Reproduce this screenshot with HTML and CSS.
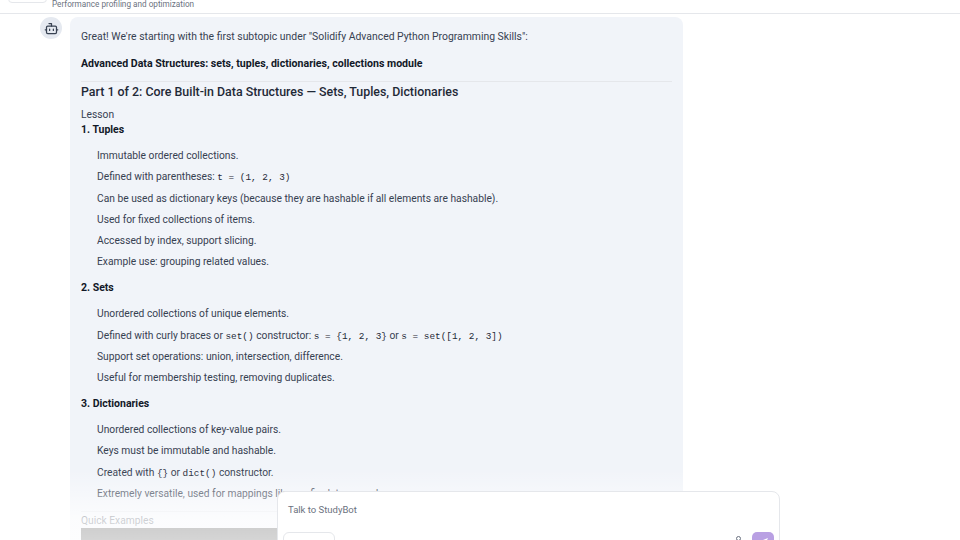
FILE: index.html
```html
<!DOCTYPE html>
<html lang="en">
<head>
    <meta charset="UTF-8">
    <title>StudyBot</title>
    <link rel="stylesheet" href="styles.css">
</head>
<body>
    <header class="topbar">
        <div class="topbar-pill"></div>
        <p class="topbar-sub">Performance profiling and optimization</p>
    </header>

    <main class="chat">
        <div class="avatar">
            <svg width="15" height="15" viewBox="0 0 24 24" fill="none" stroke="#374151" stroke-width="2" stroke-linecap="round" stroke-linejoin="round">
                <path d="M12 8V4H8"/>
                <rect x="4" y="8" width="16" height="12" rx="2"/>
                <path d="M2 14h2M20 14h2M15 13v2M9 13v2"/>
            </svg>
        </div>
        <article class="bubble">
            <p class="intro">Great! We're starting with the first subtopic under "Solidify Advanced Python Programming Skills":</p>
            <p class="intro-bold">Advanced Data Structures: sets, tuples, dictionaries, collections module</p>
            <hr class="rule">
            <h2 class="part-title">Part 1 of 2: Core Built-in Data Structures — Sets, Tuples, Dictionaries</h2>
            <p class="lesson">Lesson</p>
            <h3 class="topic first">1. Tuples</h3>
            <ul class="items">
                <li>Immutable ordered collections.</li>
                <li>Defined with parentheses: <code>t = (1, 2, 3)</code></li>
                <li>Can be used as dictionary keys (because they are hashable if all elements are hashable).</li>
                <li>Used for fixed collections of items.</li>
                <li>Accessed by index, support slicing.</li>
                <li>Example use: grouping related values.</li>
            </ul>
            <h3 class="topic">2. Sets</h3>
            <ul class="items">
                <li>Unordered collections of unique elements.</li>
                <li>Defined with curly braces or <code>set()</code> constructor: <code>s = {1, 2, 3}</code> or <code>s = set([1, 2, 3])</code></li>
                <li>Support set operations: union, intersection, difference.</li>
                <li>Useful for membership testing, removing duplicates.</li>
            </ul>
            <h3 class="topic">3. Dictionaries</h3>
            <ul class="items">
                <li>Unordered collections of key-value pairs.</li>
                <li>Keys must be immutable and hashable.</li>
                <li>Created with <code>{}</code> or <code>dict()</code> constructor.</li>
                <li>Extremely versatile, used for mappings like config data, records.</li>
            </ul>
            <hr class="rule rule-low">
            <p class="lesson">Quick Examples</p>
            <div class="code-block"></div>
        </article>
    </main>

    <div class="fade"></div>

    <form class="composer">
        <p class="composer-hint">Talk to StudyBot</p>
        <div class="composer-row">
            <button type="button" class="mode-btn"></button>
            <span class="mic-dot"></span>
            <button type="button" class="send-btn">
                <svg width="12" height="12" viewBox="0 0 24 24" fill="#fff"><path d="M22 2 2 10l7 4 4 8z"/></svg>
            </button>
        </div>
    </form>
</body>
</html>
```

FILE: styles.css
```css
html, body {
    margin: 0;
    padding: 0;
    height: 100%;
    overflow: hidden;
    background-color: white;
}

body {
    position: relative;
    font-family: Roboto, "Noto Sans", sans-serif;
    font-size: 10.25px;
    line-height: 16px;
    color: #374151;
}

.topbar {
    height: 13px;
    border-bottom: 1px solid #e5e7eb;
    position: relative;
}

.topbar-pill {
    position: absolute;
    left: 8px;
    top: -10px;
    width: 37px;
    height: 11px;
    border: 1px solid #e5e7eb;
    border-radius: 4px;
}

.topbar-sub {
    margin: 0;
    padding-left: 52px;
    font-size: 8.2px;
    line-height: 9px;
    color: #6b7280;
}

.chat {
    display: flex;
    align-items: flex-start;
    gap: 8px;
    padding: 3px 0 0 40px;
}

.avatar {
    width: 22px;
    height: 22px;
    border-radius: 50%;
    background-color: #e5e9f0;
    display: flex;
    align-items: center;
    justify-content: center;
    flex-shrink: 0;
}

.bubble {
    width: 613px;
    box-sizing: border-box;
    padding: 12px 11px 0 11px;
    background-color: #f1f4f9;
    border-radius: 8px;
}

.intro {
    margin: 0 0 11px;
    font-size: 10.4px;
}

.intro-bold {
    margin: 0 0 9px;
    font-size: 10.6px;
    font-weight: 700;
    color: #111827;
}

.rule {
    margin: 0 0 1px;
    border: none;
    border-top: 1px solid #e5e7eb;
}

.rule-low {
    margin-top: 9px;
}

.part-title {
    margin: 0 0 6px;
    font-size: 12.4px;
    line-height: 18px;
    font-weight: 500;
    color: #1f2937;
}

.lesson {
    margin: 0;
    line-height: 15px;
}

.topic {
    margin: 9.5px 0 10.5px;
    font-size: 10.5px;
    line-height: 16px;
    font-weight: 700;
    color: #111827;
}

.topic.first {
    margin: 0 0 10px;
}

.items {
    margin: 0;
    padding: 0 0 0 16px;
    list-style: none;
}

.items li {
    margin-bottom: 5.25px;
}

code {
    font-family: "Liberation Mono", monospace;
    font-size: 9.4px;
    line-height: 0;
    color: #1f2937;
}

.code-block {
    height: 60px;
    background-color: #2d2d2d;
}

.fade {
    position: absolute;
    left: 0;
    right: 0;
    bottom: 0;
    height: 70px;
    background: linear-gradient(to bottom, rgba(255,255,255,0), rgba(255,255,255,0.75) 70%, rgba(255,255,255,0.8));
}

.composer {
    position: absolute;
    left: 277px;
    top: 491px;
    width: 503px;
    height: 70px;
    box-sizing: border-box;
    padding: 10px 5px 0 10px;
    background-color: white;
    border: 1px solid #e5e7eb;
    border-radius: 8px;
}

.composer-hint {
    margin: 0;
    font-size: 9.5px;
    color: #6b7280;
}

.composer-row {
    display: flex;
    align-items: flex-start;
    margin: 14px 0 0 -5px;
    gap: 8px;
}

.mode-btn {
    width: 52px;
    height: 24px;
    background-color: white;
    border: 1px solid #e5e7eb;
    border-radius: 6px;
    padding: 0;
}

.mic-dot {
    width: 5px;
    height: 5px;
    margin: 4px 3px 0 auto;
    border: 1px solid #6b7280;
    border-radius: 50%;
    box-sizing: border-box;
}

.send-btn {
    width: 22px;
    height: 22px;
    padding: 0;
    border: none;
    border-radius: 5px;
    background-color: #b9a0e3;
    display: flex;
    align-items: center;
    justify-content: center;
}
```
